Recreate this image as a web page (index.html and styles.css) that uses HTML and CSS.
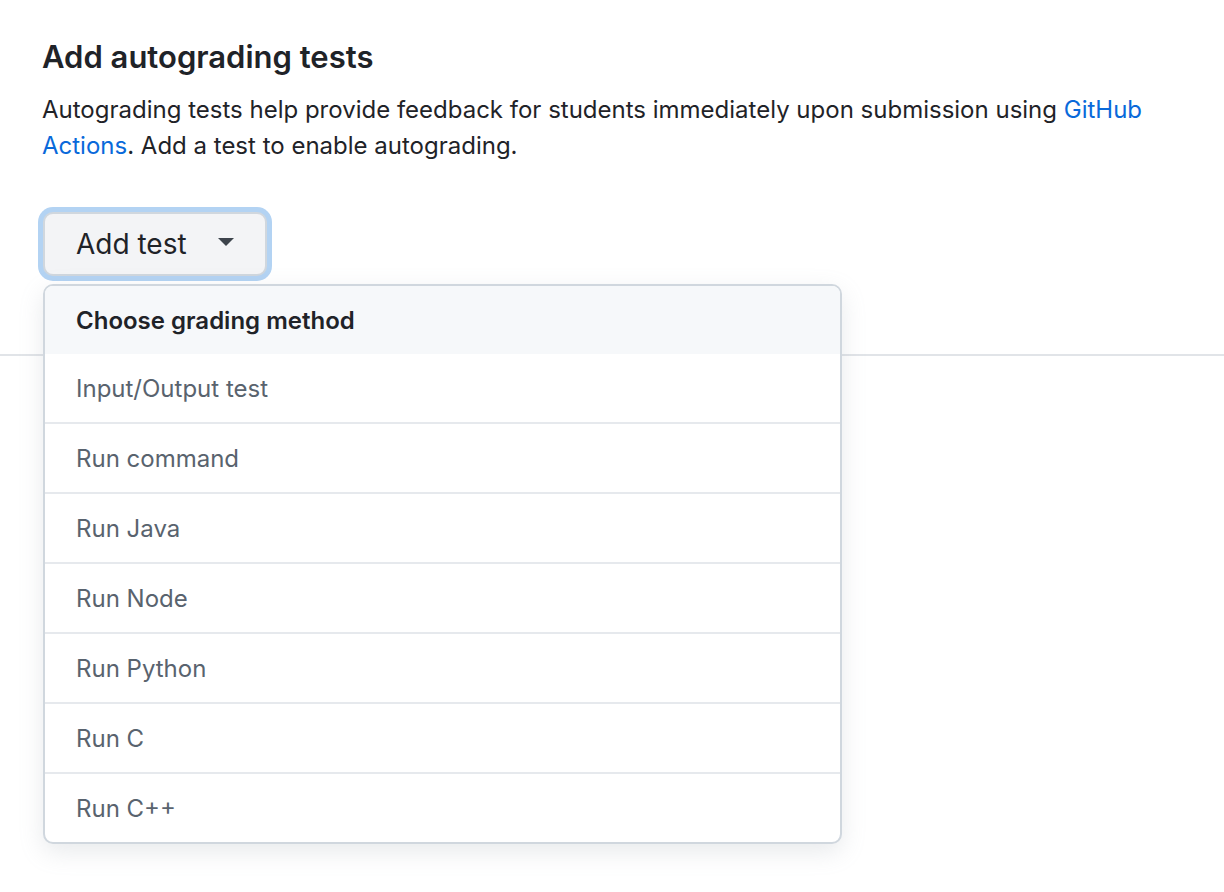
FILE: index.html
```html
<!DOCTYPE html>
<html lang="en">
<head>
<meta charset="utf-8">
<title>Add autograding tests</title>
<link rel="stylesheet" href="styles.css">
</head>
<body>
<main class="page">
  <section class="section">
    <h2 class="title">Add autograding tests</h2>
    <p class="desc">Autograding tests help provide feedback for students immediately upon submission using <a href="#" class="link">GitHub Actions</a>. Add a test to enable autograding.</p>
    <div class="menu-wrap">
      <button class="btn" type="button">
        <span>Add test</span>
        <span class="caret"></span>
      </button>
      <div class="dropdown">
        <div class="dropdown-header">Choose grading method</div>
        <div class="dropdown-item">Input/Output test</div>
        <div class="dropdown-item">Run command</div>
        <div class="dropdown-item">Run Java</div>
        <div class="dropdown-item">Run Node</div>
        <div class="dropdown-item">Run Python</div>
        <div class="dropdown-item">Run C</div>
        <div class="dropdown-item">Run C++</div>
      </div>
    </div>
  </section>
  <hr class="divider">
</main>
</body>
</html>
```
FILE: styles.css
```css
html, body {
  margin: 0;
  padding: 0;
  background: #ffffff;
}
body {
  font-family: Inter, "Liberation Sans", Arial, sans-serif;
  color: #1f2328;
}
.page {
  min-height: 892px;
}
.section {
  padding: 38px 42px 0 42px;
  width: 1140px;
}
.title {
  margin: 0;
  font-size: 31px;
  line-height: 38px;
  font-weight: 600;
  color: #1f2328;
}
.desc {
  margin: 16px 0 0 0;
  font-size: 24px;
  line-height: 36px;
  color: #1f2328;
}
.link {
  color: #0969da;
  text-decoration: none;
}
.menu-wrap {
  position: relative;
  margin-top: 48px;
  height: 64px;
}
.btn {
  display: flex;
  align-items: center;
  gap: 31px;
  height: 64px;
  box-sizing: border-box;
  padding: 0 31px;
  margin: 0 0 0 1px;
  background: #f3f4f6;
  border: 2px solid #d0d7de;
  border-radius: 10px;
  box-shadow: 0 0 0 5px #b3d3f3;
  font-family: Inter, "Liberation Sans", Arial, sans-serif;
  font-size: 28px;
  color: #1f2328;
  cursor: pointer;
}
.caret {
  width: 0;
  height: 0;
  border-left: 8px solid transparent;
  border-right: 8px solid transparent;
  border-top: 8px solid #3d444c;
  margin-top: -4px;
}
.dropdown {
  position: absolute;
  top: 72px;
  left: 1px;
  width: 799px;
  box-sizing: border-box;
  background: #ffffff;
  border: 2px solid #d0d7de;
  border-radius: 10px;
  box-shadow: 0 8px 24px rgba(140, 149, 159, 0.2);
  overflow: hidden;
  z-index: 2;
}
.dropdown-header {
  height: 68px;
  display: flex;
  align-items: center;
  padding-left: 31px;
  background: #f6f8fa;
  font-size: 24px;
  font-weight: 600;
  color: #1f2328;
}
.dropdown-item {
  height: 68px;
  display: flex;
  align-items: center;
  padding-left: 31px;
  font-size: 24px;
  color: #59636e;
}
.dropdown-item + .dropdown-item {
  border-top: 2px solid #e6e9ed;
}
.divider {
  margin: 78px 0 0 0;
  border: 0;
  border-top: 2px solid #e1e4e8;
}
```
